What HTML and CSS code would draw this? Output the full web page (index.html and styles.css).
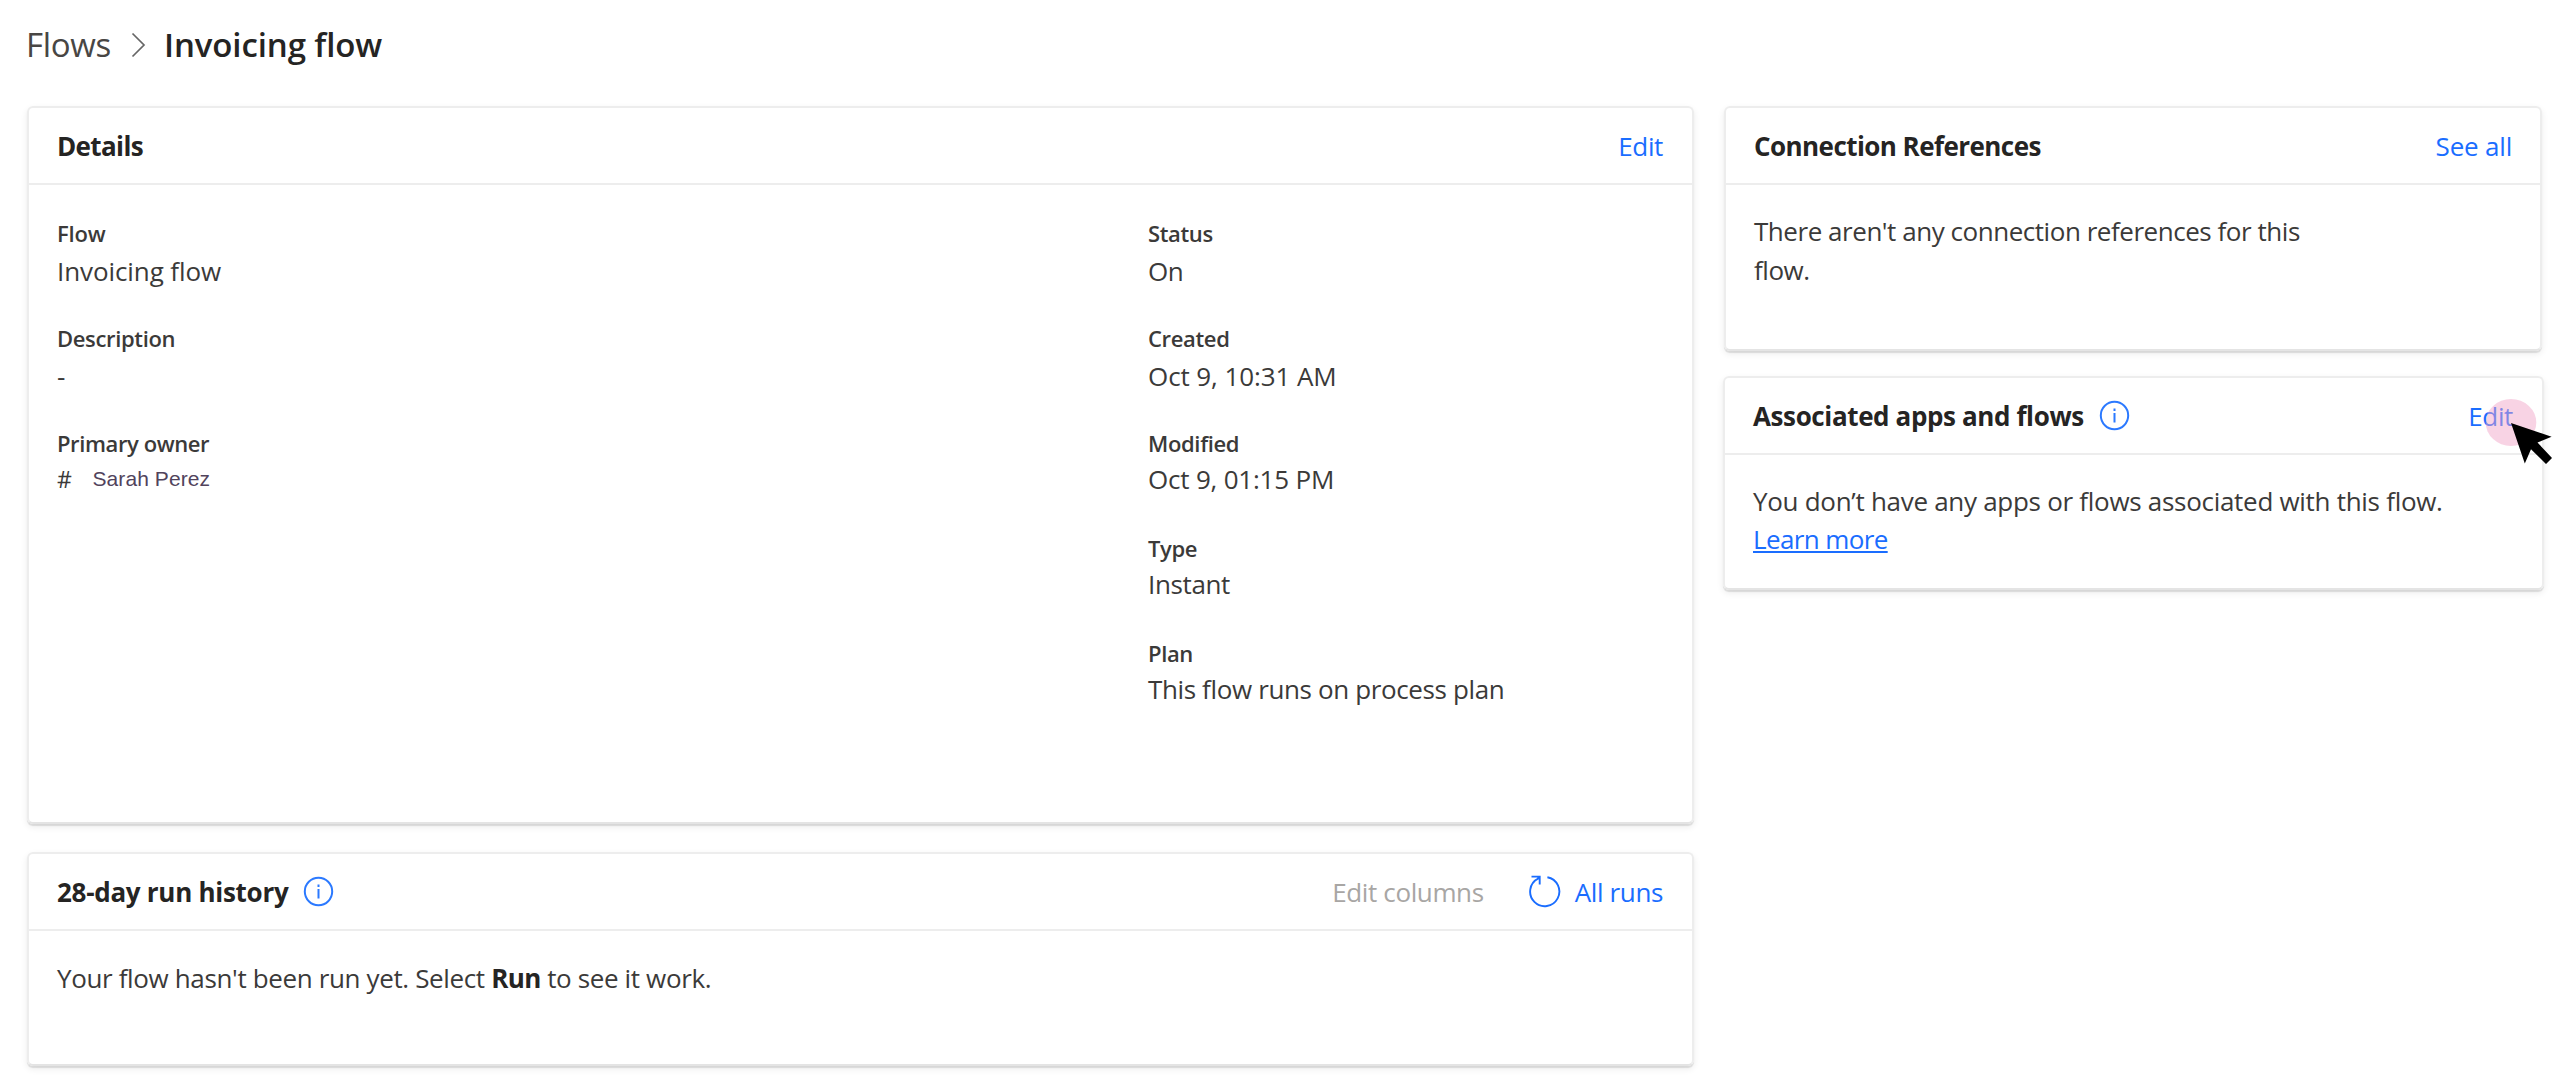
FILE: index.html
```html
<!DOCTYPE html>
<html lang="en">
<head>
<meta charset="utf-8">
<title>Invoicing flow</title>
<link rel="stylesheet" href="styles.css">
</head>
<body>
<nav class="breadcrumb">
  <a class="crumb">Flows</a>
  <svg class="chevron" width="15" height="26" viewBox="0 0 15 26" fill="none" stroke="#666" stroke-width="1.7"><path d="M1.5 1.5 13 13 1.5 24.5"/></svg>
  <h1 class="crumb-current">Invoicing flow</h1>
</nav>
<main class="page">
  <div class="column">
    <section class="card card-details">
      <header class="card-header">
        <h2 class="title title-details">Details</h2>
        <a class="link">Edit</a>
      </header>
      <div class="details">
        <dl class="fields">
          <div class="field"><dt class="track-flow">Flow</dt><dd class="track-wide">Invoicing flow</dd></div>
          <div class="field"><dt>Description</dt><dd>-</dd></div>
          <div class="field"><dt class="track-owner">Primary owner</dt><dd class="owner"><span class="owner-mark">#</span><span class="owner-name">Sarah Perez</span></dd></div>
        </dl>
        <dl class="fields">
          <div class="field"><dt>Status</dt><dd>On</dd></div>
          <div class="field"><dt>Created</dt><dd class="track-wide">Oct 9, 10:31 AM</dd></div>
          <div class="field tight"><dt>Modified</dt><dd class="track-date">Oct 9, 01:15 PM</dd></div>
          <div class="field tight"><dt>Type</dt><dd>Instant</dd></div>
          <div class="field tight"><dt>Plan</dt><dd>This flow runs on process plan</dd></div>
        </dl>
      </div>
    </section>
    <section class="card card-history">
      <header class="card-header">
        <h2 class="title title-history">28-day run history</h2>
        <svg class="info" width="31" height="31" viewBox="0 0 31 31" fill="none" stroke="#2b79ff" stroke-width="2"><circle cx="15.5" cy="15.5" r="13.7"/><path d="M15.5 13v9.5M15.5 8.5v2.4"/></svg>
        <span class="disabled">Edit columns</span>
        <svg class="refresh" width="34" height="34" viewBox="0 0 34 34" fill="none" stroke="#1a6dff" stroke-width="1.9"><path d="M20.4 3.2A14.6 14.6 0 1 1 11 4.6M4.5 2.6h8.2v7.9M12.7 2.6 10.5 5"/></svg>
        <a class="link">All runs</a>
      </header>
      <p class="message message-history">Your flow hasn't been run yet. Select <b>Run</b> to see it work.</p>
    </section>
  </div>
  <div class="column column-side">
    <section class="card card-connections">
      <header class="card-header">
        <h2 class="title title-connections">Connection References</h2>
        <a class="link link-all">See all</a>
      </header>
      <p class="message message-connections">There aren't any connection references for this<br>flow.</p>
    </section>
    <section class="card card-associated">
      <header class="card-header">
        <h2 class="title title-associated">Associated apps and flows</h2>
        <svg class="info" width="31" height="31" viewBox="0 0 31 31" fill="none" stroke="#2b79ff" stroke-width="2"><circle cx="15.5" cy="15.5" r="13.7"/><path d="M15.5 13v9.5M15.5 8.5v2.4"/></svg>
        <a class="link">Edit</a>
      </header>
      <p class="message message-associated">You don’t have any apps or flows associated with this flow.<br><a class="learn">Learn more</a></p>
      <svg class="pointer" width="70" height="68" viewBox="0 0 70 68"><ellipse cx="26" cy="25.5" rx="25.3" ry="23.5" fill="#f0a3c6" fill-opacity=".48"/><path d="M26 26 66.6 39.7 52.5 45.5 67 61 61 67 46 52.3 39.8 66.5Z" fill="#000"/></svg>
    </section>
  </div>
</main>
</body>
</html>
```
FILE: styles.css
```css
* { box-sizing: border-box; }
body {
  margin: 0;
  min-height: 1086px;
  padding: 25px 32px 0 27px;
  background: #fff;
  color: #3b3a39;
  font: 26px/40px "Open Sans", "Noto Sans", sans-serif;
  letter-spacing: -0.37px;
}
h1, h2, p, dl, dd { margin: 0; }
a { color: #1a6dff; }

.breadcrumb {
  display: flex;
  align-items: center;
  height: 81px;
  margin-left: -1px;
  padding-bottom: 41px;
  font-size: 33px;
}
.breadcrumb .crumb { color: #484644; letter-spacing: -0.32px; }
.chevron { margin: 0 0 1px 20px; }
.crumb-current {
  margin-left: 18px;
  font-size: 33px;
  font-weight: 600;
  letter-spacing: -0.1px;
  color: #252423;
}

.page {
  display: grid;
  grid-template-columns: 1667px 821px;
  column-gap: 29px;
}
.column { display: flex; flex-direction: column; gap: 28px; }
.column-side { gap: 25px; }

.card {
  border: 2px solid #ededed;
  border-bottom-color: #e4e4e4;
  border-radius: 6px;
  box-shadow: 0 2px 1px rgba(0, 0, 0, .1), 0 3px 7px rgba(0, 0, 0, .08);
}
.card-details { height: 718px; }
.card-history { height: 214px; }
.card-connections { height: 245px; margin: 0 2px 0 1px; }
.card-associated { position: relative; height: 214px; }

.card-header {
  display: flex;
  align-items: center;
  height: 77px;
  padding: 0 29px 0 28px;
  border-bottom: 2px solid #ededed;
}
.title {
  font-size: 26px;
  font-weight: 700;
  color: #252423;
}
.title-details { letter-spacing: -0.63px; }
.title-history { letter-spacing: -0.28px; }
.title-connections { letter-spacing: -0.56px; }
.title-associated { letter-spacing: -0.38px; }
.link { margin-left: auto; }
.link-all { margin-right: -1px; letter-spacing: -0.2px; }
.info { margin: 0 0 1px 15px; }
.disabled { margin-left: auto; color: #a8a6a4; }
.refresh { margin: 0 14px 1px 43px; }
.refresh + .link { margin-left: 0; }

.details {
  display: grid;
  grid-template-columns: 1091px 1fr;
  padding: 30px 0 0 28px;
}
.field { height: 105px; }
dt {
  font-size: 22px;
  font-weight: 600;
  line-height: 36px;
  letter-spacing: -0.35px;
}
.tight dd { margin-top: -2px; }
.track-flow { letter-spacing: -0.2px; }
.track-owner { letter-spacing: -0.4px; }
.track-wide { letter-spacing: -0.09px; }
.track-date { letter-spacing: -0.2px; }
.owner {
  display: flex;
  gap: 21px;
  line-height: 36px;
}
.owner-mark { font-size: 23px; }
.owner-name {
  font-family: "Liberation Sans", Arial, sans-serif;
  font-size: 21px;
  letter-spacing: 0.08px;
  color: #51435c;
}

.message { padding-left: 28px; }
.message b { font-weight: 700; letter-spacing: -0.6px; color: #252423; }
.message-history { padding-top: 28px; line-height: 38px; letter-spacing: -0.36px; }
.message-connections { padding-top: 27px; line-height: 39px; letter-spacing: -0.46px; }
.message-associated { padding-top: 28px; line-height: 37.5px; letter-spacing: -0.29px; }
.learn {
  text-decoration: underline;
  text-decoration-thickness: 2px;
  text-underline-offset: 2px;
  letter-spacing: -0.62px;
}

/* Click highlight and mouse pointer over the Edit link */
.pointer {
  position: absolute;
  left: 760px;
  top: 19px;
}
```
